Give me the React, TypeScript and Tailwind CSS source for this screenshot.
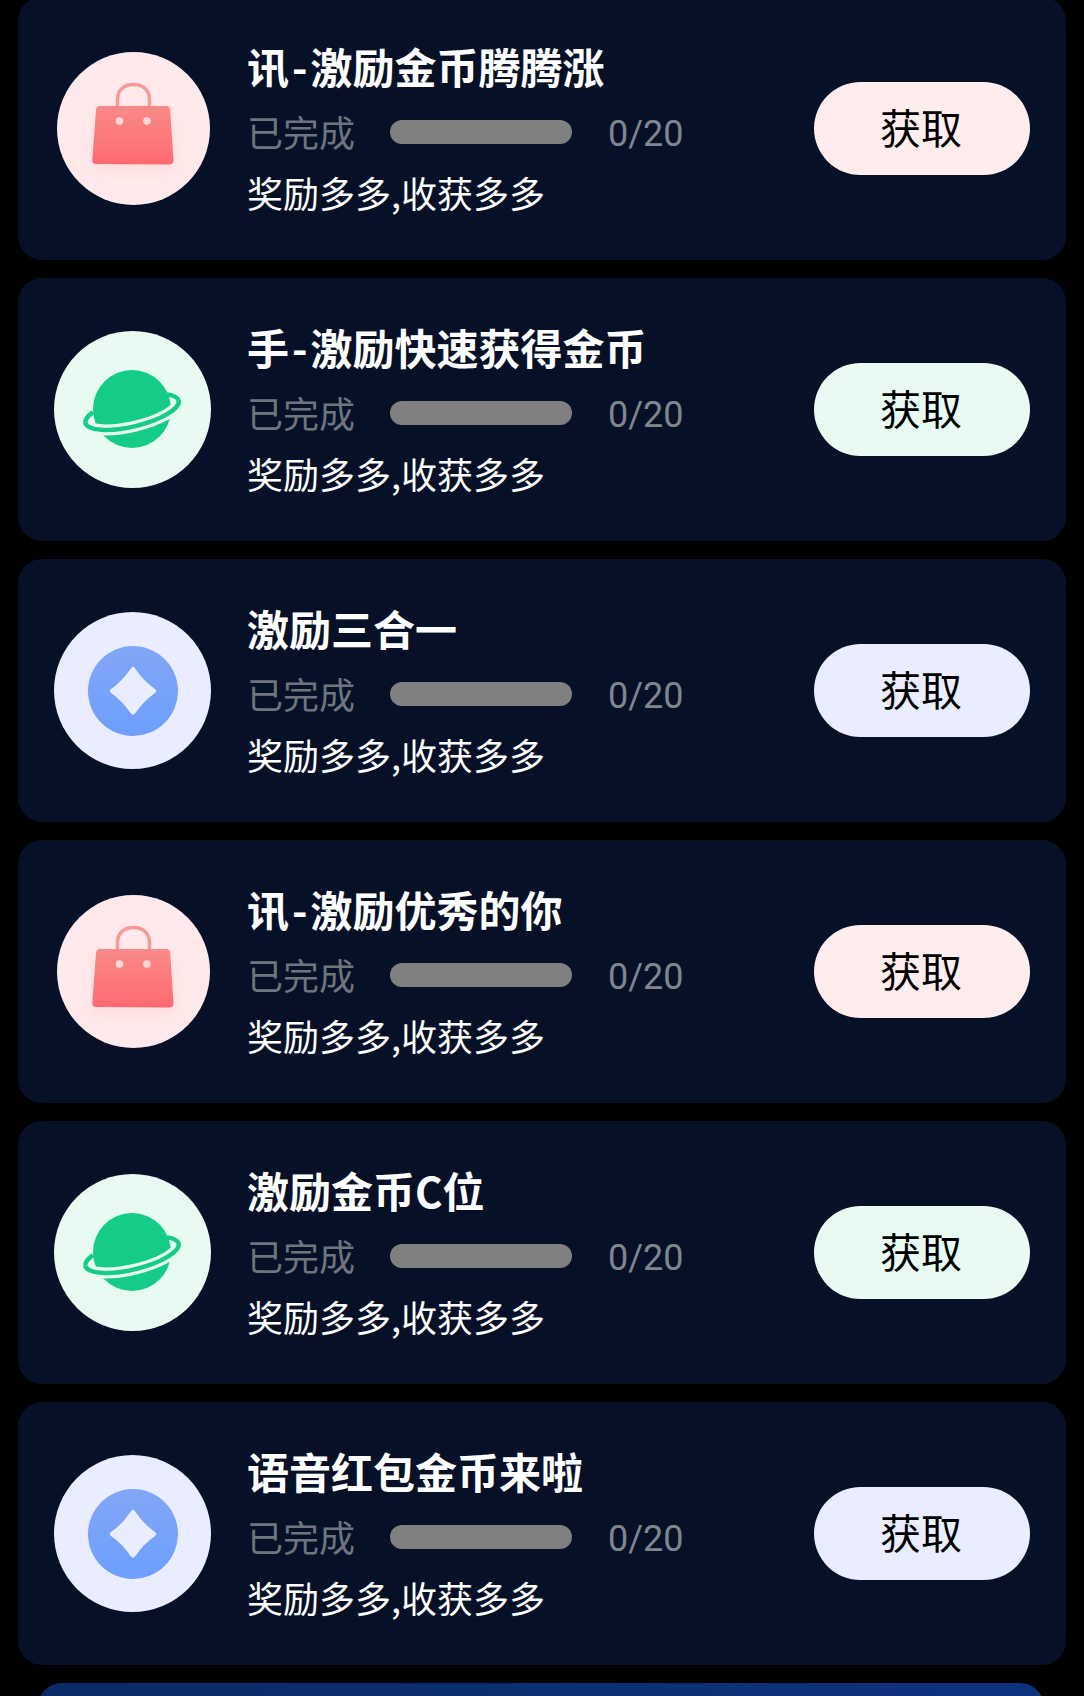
const font = { fontFamily: '"Noto Sans CJK SC", "Noto Sans", sans-serif' };

function Bag() {
  return (
    <div className="flex h-[157px] w-[157px] items-center justify-center">
      <div className="ml-[2px] h-[153px] w-[153px] rounded-full bg-[#ffe9ea]">
        <svg viewBox="0 0 153 153" className="h-full w-full">
          <defs>
            <linearGradient id="bagFill" x1="0" y1="0" x2="0" y2="1">
              <stop offset="0" stopColor="#f98a88" />
              <stop offset="1" stopColor="#ff6a70" />
            </linearGradient>
            <filter id="bagBlur" x="-40%" y="-40%" width="180%" height="180%">
              <feGaussianBlur stdDeviation="7" />
            </filter>
            <filter id="bagSoft" x="-10%" y="-10%" width="120%" height="120%">
              <feGaussianBlur stdDeviation="0.6" />
            </filter>
          </defs>
          <path d="M40 60 L112 60 L118 118 L34 118 Z" fill="#ffcfd1" opacity="0.55" filter="url(#bagBlur)" />
          <g filter="url(#bagSoft)">
            <path d="M60.5 55 V48 C60.5 38 67 32.5 76.5 32.5 C86 32.5 92.5 38 92.5 48 V55" fill="none" stroke="#f59c98" strokeWidth="3.5" />
            <path d="M43 54 H109 Q113 54 113.2 58 L116.5 108 Q116.7 112.5 112 112.5 L39.5 112 Q35 112 35.3 107.5 L39 58 Q39.3 54 43 54 Z" fill="url(#bagFill)" />
            <circle cx="62.5" cy="69" r="3.8" fill="#ffd9d9" />
            <circle cx="90" cy="69" r="3.8" fill="#ffd9d9" />
          </g>
        </svg>
      </div>
    </div>
  );
}

function Planet() {
  return (
    <div className="h-[157px] w-[157px] rounded-full bg-[#e8fbf3]">
      <svg viewBox="0 0 157 157" className="h-full w-full">
        <circle cx="78" cy="78" r="39" fill="#14cc85" />
        <g transform="rotate(-13.5 78 80.5)">
          <path d="M30 80.5 A48 15 0 0 0 126 80.5" fill="none" stroke="#e8fbf3" strokeWidth="11" />
          <path d="M30 80.5 A48 15 0 0 0 126 80.5" fill="none" stroke="#14cc85" strokeWidth="4.5" />
          <path d="M30 80.5 A48 15 0 0 1 40 72" fill="none" stroke="#14cc85" strokeWidth="4.5" />
          <path d="M126 80.5 A48 15 0 0 0 116 72" fill="none" stroke="#14cc85" strokeWidth="4.5" />
        </g>
      </svg>
    </div>
  );
}

function Coin() {
  return (
    <div className="flex h-[157px] w-[157px] items-center justify-center rounded-full bg-[#e9edff]">
      <svg viewBox="0 0 90 90" className="h-[90px] w-[90px]">
        <defs>
          <linearGradient id="coinFill" x1="0" y1="0" x2="0" y2="1">
            <stop offset="0" stopColor="#82a6f5" />
            <stop offset="1" stopColor="#6d9fff" />
          </linearGradient>
        </defs>
        <circle cx="45" cy="45" r="45" fill="url(#coinFill)" />
        <path d="M45 20.5 Q46 20.5 47.5 23 Q56 35.5 67 43 Q69.5 45 67 47 Q56 54.5 47.5 67 Q45 70.5 42.5 67 Q34 54.5 23 47 Q20.5 45 23 43 Q34 35.5 42.5 23 Q44 20.5 45 20.5 Z" fill="#e9edff" />
      </svg>
    </div>
  );
}

type Kind = "bag" | "planet" | "coin";

const btnBg: Record<Kind, string> = {
  bag: "bg-[#ffecec]",
  planet: "bg-[#e8fbf3]",
  coin: "bg-[#e9edff]",
};

const rows: { prefix?: string; title: string; kind: Kind }[] = [
  { prefix: "讯", title: "激励金币腾腾涨", kind: "bag" },
  { prefix: "手", title: "激励快速获得金币", kind: "planet" },
  { title: "激励三合一", kind: "coin" },
  { prefix: "讯", title: "激励优秀的你", kind: "bag" },
  { title: "激励金币C位", kind: "planet" },
  { title: "语音红包金币来啦", kind: "coin" },
];

function Card({ prefix, title, kind }: { prefix?: string; title: string; kind: Kind }) {
  return (
    <div className="flex h-[263px] shrink-0 items-center rounded-[24px] bg-[#061128] pl-[36px] pr-[36px]">
      {kind === "bag" ? <Bag /> : kind === "planet" ? <Planet /> : <Coin />}
      <div className="ml-[36px] flex flex-1 flex-col">
        <div className="h-[58px] text-[42px] font-bold leading-[58px] text-white">
          {prefix && (
            <>
              {prefix}
              <span className="mx-[3px]">-</span>
            </>
          )}
          {title}
        </div>
        <div className="mt-[7px] flex h-[58px] items-center">
          <span className="w-[143px] text-[36px] leading-[58px] text-[#6f757f]">已完成</span>
          <span className="mt-[2px] h-[24px] w-[182px] rounded-full bg-[#808080]" />
          <span className="ml-[36px] mt-[6px] text-[36px] leading-[58px] text-[#80858f]" style={{ fontFamily: "Roboto, sans-serif" }}>
            0/20
          </span>
        </div>
        <div className="mt-[3px] h-[58px] text-[36px] leading-[58px] text-white">奖励多多,收获多多</div>
      </div>
      <div className={`flex h-[93px] w-[216px] items-center justify-center rounded-full pb-[4px] pr-[2px] text-[41px] text-black ${btnBg[kind]}`}>
        获取
      </div>
    </div>
  );
}

export default function App() {
  return (
    <div className="h-[1696px] w-[1084px] overflow-hidden bg-black" style={font}>
      <div className="-mt-[3px] flex flex-col gap-[18px] px-[18px]">
        {rows.map((r) => (
          <Card key={r.title} prefix={r.prefix} title={r.title} kind={r.kind} />
        ))}
        <div className="ml-[20px] mr-[22px] h-[60px] shrink-0 rounded-t-[24px] bg-gradient-to-r from-[#0a2a66] to-[#0d337e]" />
      </div>
    </div>
  );
}
